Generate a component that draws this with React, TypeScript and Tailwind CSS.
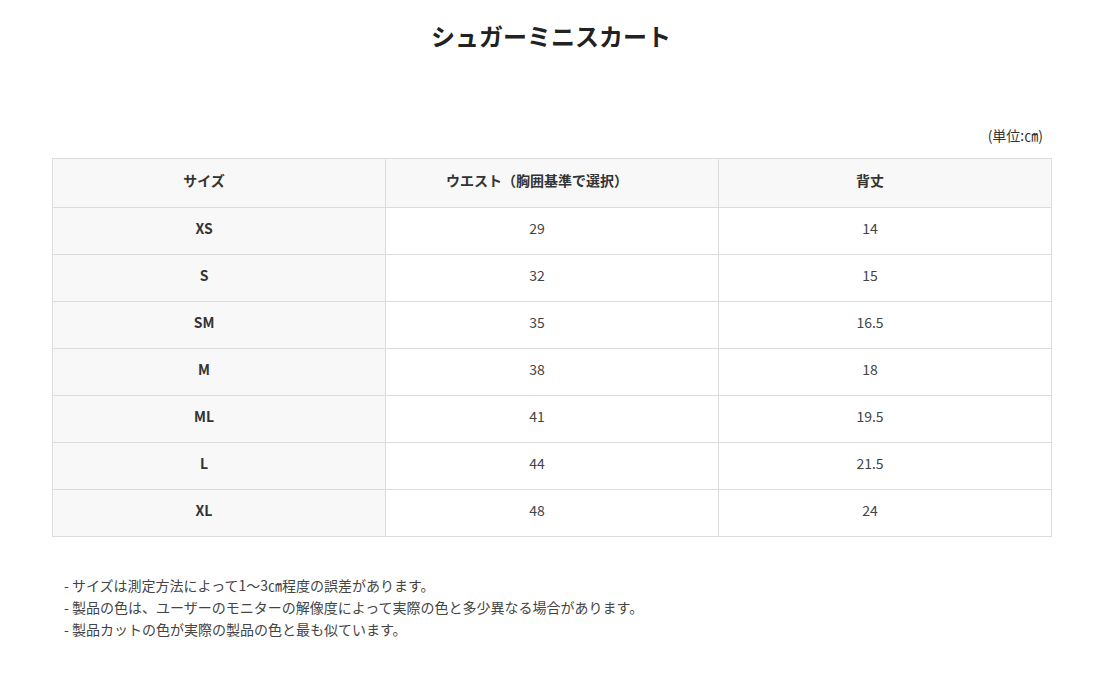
import React from "react";

const rows = [
  ["XS", "29", "14"],
  ["S", "32", "15"],
  ["SM", "35", "16.5"],
  ["M", "38", "18"],
  ["ML", "41", "19.5"],
  ["L", "44", "21.5"],
  ["XL", "48", "24"],
];

export default function App() {
  return (
    <div
      className="w-[1102px] h-[682px] bg-white text-[#333]"
      style={{ fontFamily: '"Noto Sans CJK JP", "Noto Sans", sans-serif' }}
    >
      <div className="pl-[52px] pr-[50px] pt-[17px]">
        <h1 className="text-center text-[24px] leading-[38px] font-bold text-[#222] pr-[2px]">
          シュガーミニスカート
        </h1>
        <div className="mt-[70px] text-right text-[14px] leading-[20px] text-[#333] pr-[9px]">
          (単位:㎝)
        </div>
        <div className="mt-[13px] border border-[#dcdcdc]">
          <div className="grid grid-cols-[333px_333px_1fr] h-[48px] bg-[#f8f8f8] text-[14px] font-bold">
            <div className="flex items-center justify-center pr-[30px] pb-[5px] border-r border-[#dcdcdc]">サイズ</div>
            <div className="flex items-center justify-center pr-[30px] pb-[5px] border-r border-[#dcdcdc]">ウエスト（胸囲基準で選択）</div>
            <div className="flex items-center justify-center pr-[30px] pb-[5px]">背丈</div>
          </div>
          {rows.map((r) => (
            <div key={r[0]} className="grid grid-cols-[333px_333px_1fr] h-[47px] border-t border-[#dcdcdc] text-[14px]">
              <div className="flex items-center justify-center pr-[30px] pb-[6px] border-r border-[#dcdcdc] bg-[#f8f8f8] font-bold">{r[0]}</div>
              <div className="flex items-center justify-center pr-[30px] pb-[6px] border-r border-[#dcdcdc] text-[#444]">{r[1]}</div>
              <div className="flex items-center justify-center pr-[30px] pb-[6px] text-[#444]">{r[2]}</div>
            </div>
          ))}
        </div>
        <div className="mt-[37px] pl-[12px] text-[14px] leading-[22px] text-[#444]">
          <p>- サイズは測定方法によって1～3㎝程度の誤差があります。</p>
          <p>- 製品の色は、ユーザーのモニターの解像度によって実際の色と多少異なる場合があります。</p>
          <p>- 製品カットの色が実際の製品の色と最も似ています。</p>
        </div>
      </div>
    </div>
  );
}
